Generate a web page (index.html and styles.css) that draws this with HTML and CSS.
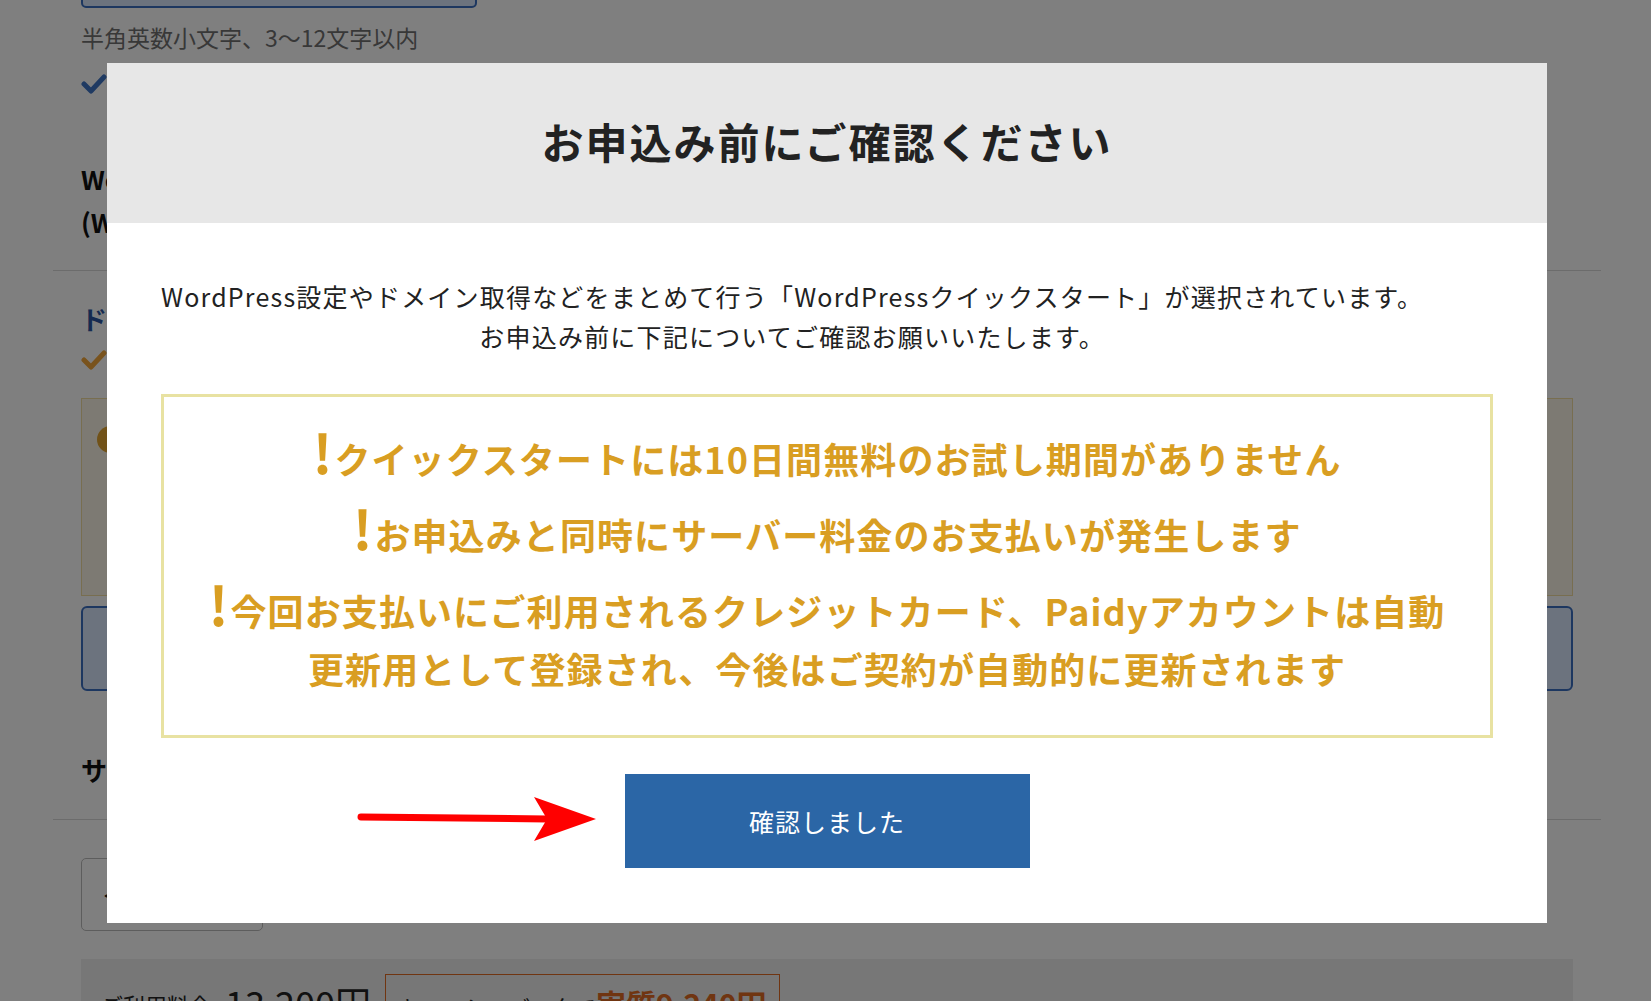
FILE: index.html
```html
<!DOCTYPE html>
<html lang="ja">
<head>
    <meta charset="UTF-8">
    <meta name="viewport" content="width=device-width, initial-scale=1.0">
    <title>お申込み内容の確認</title>
    <link rel="stylesheet" href="styles.css">
</head>
<body>
    <!-- 背景の申込みフォーム -->
    <div class="page">
        <div class="section">
            <div class="input-box"></div>
            <p class="hint">半角英数小文字、3〜12文字以内</p>
            <div class="check-row">
                <svg class="check" width="26" height="20" viewBox="0 0 26 20"><polyline points="3,10 10,17 23,3" fill="none" stroke="#3f74c4" stroke-width="5" stroke-linecap="round" stroke-linejoin="round"/></svg>
                <span>ご利用いただけます</span>
            </div>
            <h2 class="sec-title sec-wp">WordPressサイト情報<br>(WordPressのログイン情報)</h2>
        </div>
        <hr class="divider divider-top">
        <div class="section">
            <h2 class="sec-title sec-domain">ドメイン</h2>
            <div class="check-row check-orange">
                <svg class="check" width="26" height="20" viewBox="0 0 26 20"><polyline points="3,10 10,17 23,3" fill="none" stroke="#f2a63a" stroke-width="5" stroke-linecap="round" stroke-linejoin="round"/></svg>
                <span>独自ドメイン永久無料</span>
            </div>
            <div class="notice-box">
                <span class="dot"></span>
            </div>
            <div class="domain-box"></div>
            <h2 class="sec-title sec-server">サーバー</h2>
        </div>
        <hr class="divider divider-bottom">
        <div class="section">
            <div class="back-btn">&lt; 戻る</div>
            <div class="total-bar">
                <span class="total-label">ご利用料金</span>
                <span class="total-price">13,200円</span>
                <span class="cashback">キャッシュバックで<b>実質9,240円</b></span>
            </div>
        </div>
    </div>

    <!-- 確認モーダル -->
    <div class="overlay">
        <div class="modal">
            <div class="modal-head">
                <h1>お申込み前にご確認ください</h1>
            </div>
            <div class="modal-body">
                <p class="lead">WordPress設定やドメイン取得などをまとめて行う「WordPressクイックスタート」が選択されています。<br>お申込み前に下記についてご確認お願いいたします。</p>
                <div class="caution">
                    <p><span class="mark">!</span>クイックスタートには10日間無料のお試し期間がありません</p>
                    <p><span class="mark">!</span>お申込みと同時にサーバー料金のお支払いが発生します</p>
                    <p><span class="mark">!</span>今回お支払いにご利用されるクレジットカード、Paidyアカウントは自動<br>更新用として登録され、今後はご契約が自動的に更新されます</p>
                </div>
                <div class="confirm-row">
                    <div class="confirm-wrap">
                        <svg class="arrow" width="242" height="50" viewBox="0 0 242 50">
                            <line x1="4" y1="23" x2="190" y2="25" stroke="#ff0000" stroke-width="7" stroke-linecap="round"/>
                            <polygon points="177,3 239,25 177,47 190,25" fill="#ff0000"/>
                        </svg>
                        <button type="button" class="confirm">確認しました</button>
                    </div>
                </div>
            </div>
        </div>
    </div>
</body>
</html>
```

FILE: styles.css
```css
/* 全体 */
body {
    margin: 0;
    font-family: "Noto Sans CJK JP", "Noto Sans", sans-serif;
    color: #222;
    background: #fff;
    overflow: hidden;
}

/* 背景のフォーム */
.page {
    width: 1548px;
    margin-left: 53px;
}
.section {
    padding: 0 28px;
}
.input-box {
    width: 392px;
    height: 44px;
    margin-top: -40px;
    background: #d9e6fc;
    border: 2px solid #3b6fc0;
    border-radius: 5px;
}
.hint {
    margin: 14px 0 0;
    font-size: 23px;
    line-height: 30px;
    color: #707070;
}
.check-row {
    display: flex;
    align-items: center;
    gap: 10px;
    height: 20px;
    margin-top: 22px;
    font-size: 20px;
    font-weight: bold;
}
.check {
    display: block;
}
.sec-title {
    margin: 0;
    font-size: 26px;
    font-weight: bold;
    color: #111;
}
.sec-wp {
    margin-top: 63px;
    line-height: 43px;
}
.divider {
    margin: 0;
    border: none;
    border-top: 1px solid #d8d8d8;
}
.divider-top {
    margin-top: 27px;
}
.sec-domain {
    margin-top: 30px;
    line-height: 36px;
    color: #2a55a0;
}
.check-orange {
    margin-top: 13px;
}
.notice-box {
    height: 198px;
    margin-top: 28px;
    padding: 27px 0 0 15px;
    box-sizing: border-box;
    background: #faf5e6;
    border: 1px solid #f0dca0;
}
.dot {
    display: block;
    width: 27px;
    height: 27px;
    border-radius: 50%;
    background: #e2a430;
}
.domain-box {
    height: 85px;
    margin-top: 10px;
    box-sizing: border-box;
    background: #d9e6fc;
    border: 2px solid #3b6fc0;
    border-radius: 6px;
}
.sec-server {
    margin-top: 61px;
    line-height: 36px;
}
.divider-bottom {
    margin-top: 31px;
}
.back-btn {
    width: 182px;
    height: 73px;
    margin-top: 38px;
    box-sizing: border-box;
    padding-left: 22px;
    line-height: 71px;
    font-size: 22px;
    border: 1px solid #bbb;
    border-radius: 5px;
}
.total-bar {
    display: flex;
    align-items: flex-start;
    gap: 14px;
    height: 90px;
    margin-top: 28px;
    padding: 15px 20px 0;
    background: #eee;
}
.total-label {
    margin-top: 14px;
    font-size: 22px;
}
.total-price {
    margin-top: 2px;
    font-size: 36px;
}
.cashback {
    padding: 6px 12px;
    font-size: 22px;
    border: 1px solid #e06a22;
}
.cashback b {
    font-size: 30px;
    color: #e06a22;
}

/* モーダル */
.overlay {
    position: fixed;
    top: 0;
    left: 0;
    right: 0;
    bottom: 0;
    display: flex;
    justify-content: center;
    align-items: flex-start;
    padding: 63px 0 0 3px;
    background: rgba(0, 0, 0, 0.5);
}
.modal {
    width: 1440px;
    background: #fff;
}
.modal-head {
    display: flex;
    align-items: center;
    justify-content: center;
    height: 160px;
    padding-bottom: 5px;
    box-sizing: border-box;
    background: #e7e7e7;
}
.modal-head h1 {
    margin: 0;
    font-size: 42px;
    font-weight: bold;
    letter-spacing: 2px;
    color: #222;
}
.modal-body {
    padding: 53px 54px 55px;
}
.lead {
    display: inline-block;
    margin: 0;
    text-align: center;
    font-size: 25px;
    line-height: 40px;
    letter-spacing: 1.2px;
    color: #222;
}

/* 注意事項の枠 */
.caution {
    margin-top: 38px;
    padding: 32px 20px 38px;
    text-align: center;
    font-size: 36px;
    font-weight: bold;
    line-height: 58px;
    letter-spacing: 1.1px;
    color: #d99e22;
    border: 3px solid #e8e2a2;
}
.caution p {
    margin: 0;
}
.caution p + p {
    margin-top: 18px;
}
.mark {
    font-size: 54px;
    line-height: 0;
    letter-spacing: 0;
    margin-right: 2px;
}

/* 確認ボタン */
.confirm-row {
    display: flex;
    justify-content: center;
    margin-top: 36px;
}
.confirm-wrap {
    position: relative;
}
.arrow {
    position: absolute;
    right: 100%;
    top: 20px;
    margin-right: 26px;
}
.confirm {
    display: block;
    width: 405px;
    height: 94px;
    padding-bottom: 2px;
    border: none;
    background: #2b66a6;
    color: #fff;
    font-family: "Noto Sans CJK JP", "Noto Sans", sans-serif;
    font-size: 25px;
    letter-spacing: 1px;
}
```
